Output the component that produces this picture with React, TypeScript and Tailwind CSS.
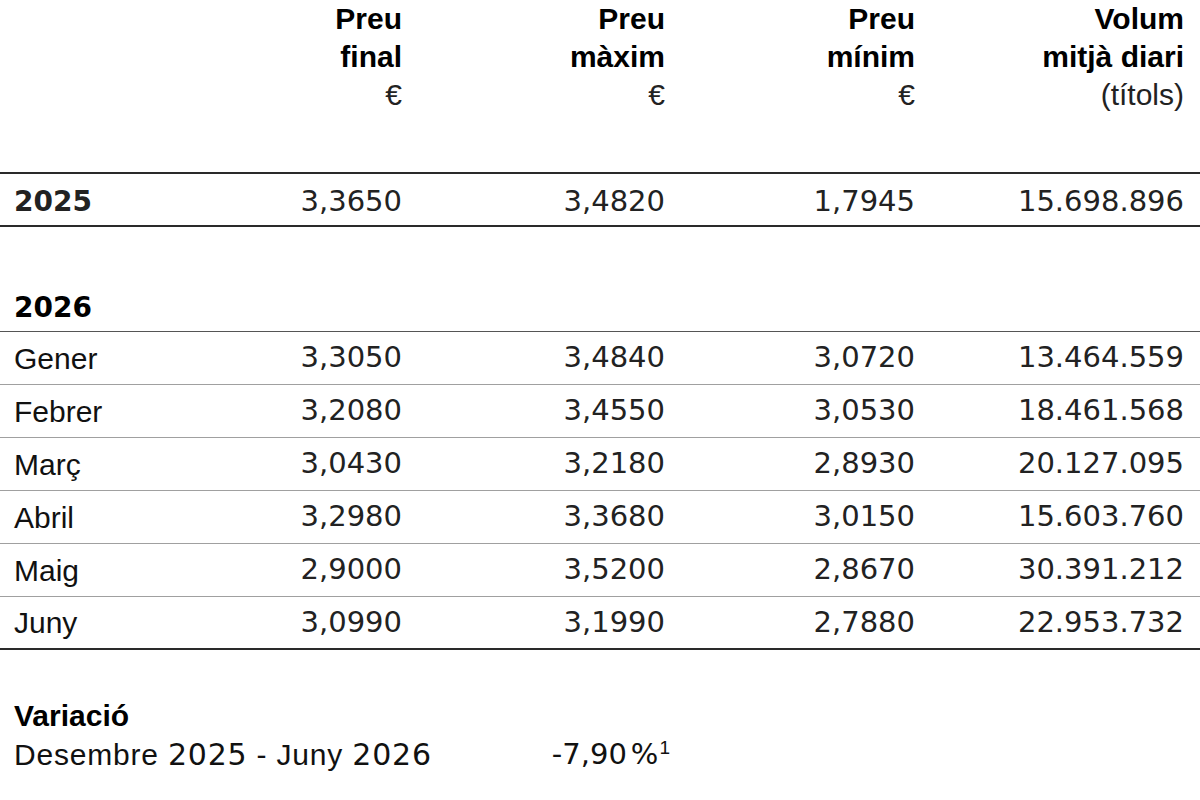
const cols = 'grid grid-cols-[140px_262px_263px_250px_269px] pr-4';
const label = "font-['Liberation_Sans',Arial,sans-serif]";
const num = "font-['DejaVu_Sans',sans-serif]";

const months = [
  ['Gener', '3,3050', '3,4840', '3,0720', '13.464.559'],
  ['Febrer', '3,2080', '3,4550', '3,0530', '18.461.568'],
  ['Març', '3,0430', '3,2180', '2,8930', '20.127.095'],
  ['Abril', '3,2980', '3,3680', '3,0150', '15.603.760'],
  ['Maig', '2,9000', '3,5200', '2,8670', '30.391.212'],
  ['Juny', '3,0990', '3,1990', '2,7880', '22.953.732'],
];

function HeadCell({ top, mid, unit }: { top: string; mid: string; unit: string }) {
  return (
    <div className={`text-right text-[30px] leading-[38px] text-black ${label}`}>
      <div className="font-bold">{top}</div>
      <div className="font-bold whitespace-nowrap">{mid}</div>
      <div className="text-[#222]">{unit}</div>
    </div>
  );
}

function DataRow({ cells, last }: { cells: string[]; last?: boolean }) {
  return (
    <div
      className={`${cols} h-[53px] items-center border-b ${
        last ? 'border-b-2 border-[#2a2a2a]' : 'border-[#a0a0a0]'
      }`}
    >
      <div className={`pl-[14px] text-[30px] text-[#111] ${label}`}>{cells[0]}</div>
      {cells.slice(1).map((c, i) => (
        <div key={i} className={`text-right text-[29px] text-[#222] ${num}`}>
          {c}
        </div>
      ))}
    </div>
  );
}

export default function App() {
  return (
    <div className="w-[1200px] h-[800px] bg-white overflow-hidden">
      <div className={`${cols} h-[172px]`}>
        <div />
        <HeadCell top="Preu" mid="final" unit="€" />
        <HeadCell top="Preu" mid="màxim" unit="€" />
        <HeadCell top="Preu" mid="mínim" unit="€" />
        <HeadCell top="Volum" mid="mitjà diari" unit="(títols)" />
      </div>

      <div className={`${cols} h-[55px] pt-[5px] items-center border-y-2 border-[#2a2a2a]`}>
        <div className={`pl-[14px] text-[28px] font-bold text-[#222] ${num}`}>2025</div>
        <div className={`text-right text-[29px] text-[#222] ${num}`}>3,3650</div>
        <div className={`text-right text-[29px] text-[#222] ${num}`}>3,4820</div>
        <div className={`text-right text-[29px] text-[#222] ${num}`}>1,7945</div>
        <div className={`text-right text-[29px] text-[#222] ${num}`}>15.698.896</div>
      </div>

      <div className="h-[52px]" />

      <div className="h-[53px] flex items-center pt-[6px] pl-[14px] border-b-[1.5px] border-[#555]">
        <span className={`text-[28px] font-bold text-black ${num}`}>2026</span>
      </div>

      {months.map((m, i) => (
        <DataRow key={m[0]} cells={m} last={i === months.length - 1} />
      ))}

      <div className="pt-[46px]">
        <div className={`pl-[14px] text-[30px] leading-[39px] font-bold text-black ${label}`}>Variació</div>
        <div className={`${cols} text-[30px] leading-[39px] text-[#111]`}>
          <div className={`col-span-2 pl-[14px] whitespace-nowrap tracking-[0.8px] ${label}`}>
            Desembre <span className={num}>2025</span> - Juny <span className={num}>2026</span>
          </div>
          <div className={`text-right -mr-[5px] whitespace-nowrap ${num} text-[29px]`}>
            -7,90<span className="ml-[4px]">%</span>
            <span className={`inline-block align-top text-[19px] leading-[19px] mt-[3px] ml-[1px] ${label}`}>1</span>
          </div>
        </div>
      </div>
    </div>
  );
}
